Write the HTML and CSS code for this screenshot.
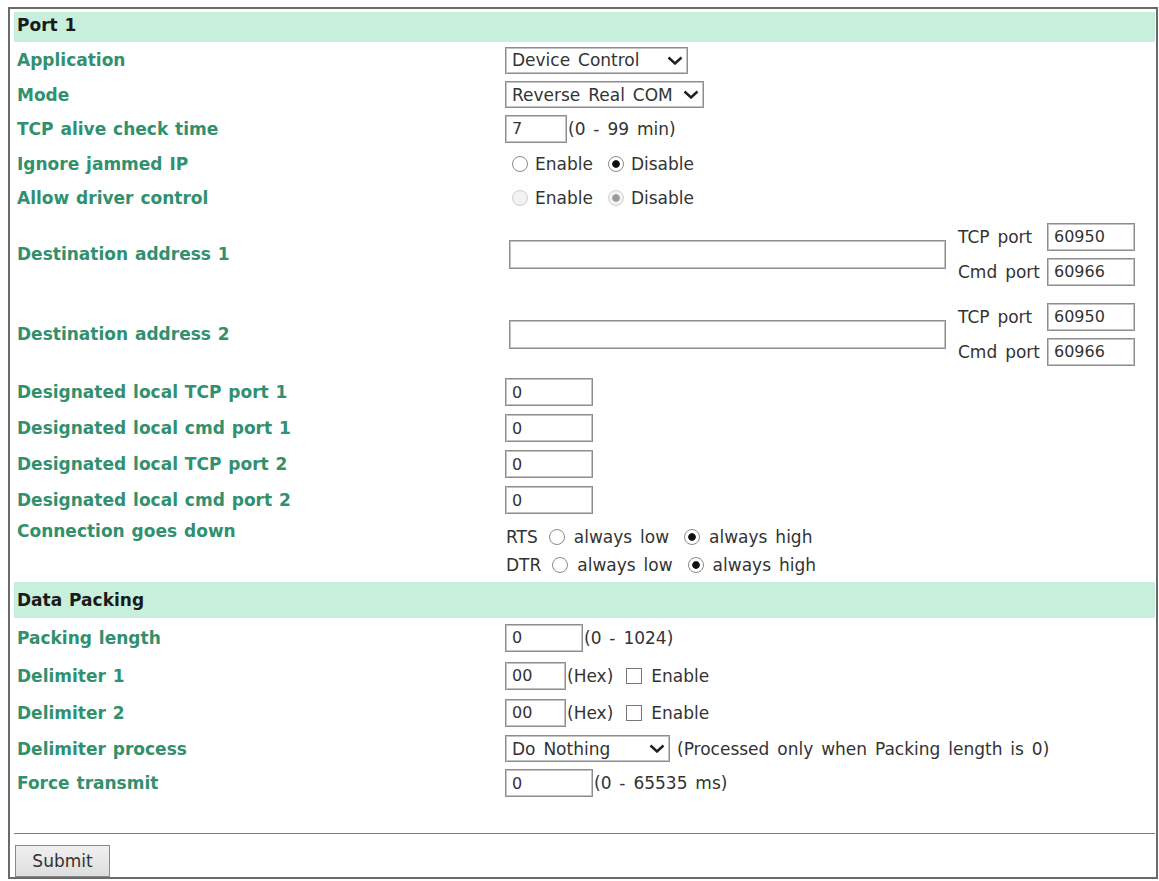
FILE: index.html
```html
<!DOCTYPE html>
<html>

<head>
  <title>Serial Port Operation Mode</title>
  <link rel="stylesheet" href="styles.css">
</head>

<body>
  <form class="frame">
    <!-- Port 1 section -->
    <div class="band">Port 1</div>

    <div class="row h36">
      <div class="label">Application</div>
      <div class="value">
        <span class="sel w-app">
          <select><option>Device Control</option></select>
          <svg class="chev" width="16" height="9" viewBox="0 0 16 9"><polyline points="1.5,1.5 8,7.5 14.5,1.5" /></svg>
        </span>
      </div>
    </div>

    <div class="row h33">
      <div class="label">Mode</div>
      <div class="value">
        <span class="sel w-mode">
          <select><option>Reverse Real COM</option></select>
          <svg class="chev" width="16" height="9" viewBox="0 0 16 9"><polyline points="1.5,1.5 8,7.5 14.5,1.5" /></svg>
        </span>
      </div>
    </div>

    <div class="row h35">
      <div class="label">TCP alive check time</div>
      <div class="value"><input class="txt w62" type="text" value="7"><span class="hint">(0 - 99 min)</span></div>
    </div>

    <div class="row h35">
      <div class="label">Ignore jammed IP</div>
      <div class="value">
        <label class="opt"><input type="radio" name="jam">Enable</label>
        <label class="opt"><input type="radio" name="jam" checked>Disable</label>
      </div>
    </div>

    <div class="row h33">
      <div class="label">Allow driver control</div>
      <div class="value">
        <label class="opt"><input type="radio" name="drv" disabled>Enable</label>
        <label class="opt"><input type="radio" name="drv" checked disabled>Disable</label>
      </div>
    </div>

    <div class="row h80">
      <div class="label">Destination address 1</div>
      <div class="value dest">
        <input class="txt addr" type="text">
        <div class="ports">
          <span>TCP port</span><input class="txt w88" type="text" value="60950">
          <span>Cmd port</span><input class="txt w88" type="text" value="60966">
        </div>
      </div>
    </div>

    <div class="row h80">
      <div class="label">Destination address 2</div>
      <div class="value dest">
        <input class="txt addr" type="text">
        <div class="ports">
          <span>TCP port</span><input class="txt w88" type="text" value="60950">
          <span>Cmd port</span><input class="txt w88" type="text" value="60966">
        </div>
      </div>
    </div>

    <div class="row h36">
      <div class="label">Designated local TCP port 1</div>
      <div class="value"><input class="txt w88" type="text" value="0"></div>
    </div>
    <div class="row h36">
      <div class="label">Designated local cmd port 1</div>
      <div class="value"><input class="txt w88" type="text" value="0"></div>
    </div>
    <div class="row h36">
      <div class="label">Designated local TCP port 2</div>
      <div class="value"><input class="txt w88" type="text" value="0"></div>
    </div>
    <div class="row h36">
      <div class="label">Designated local cmd port 2</div>
      <div class="value"><input class="txt w88" type="text" value="0"></div>
    </div>

    <div class="row h64 top">
      <div class="label">Connection goes down</div>
      <div class="value lines">
        <div>RTS<label class="opt"><input type="radio" name="rts">always low</label><label class="opt"><input type="radio" name="rts" checked>always high</label></div>
        <div>DTR<label class="opt"><input type="radio" name="dtr">always low</label><label class="opt"><input type="radio" name="dtr" checked>always high</label></div>
      </div>
    </div>

    <!-- Data Packing section -->
    <div class="band tall">Data Packing</div>

    <div class="row h39">
      <div class="label">Packing length</div>
      <div class="value"><input class="txt w78" type="text" value="0"><span class="hint">(0 - 1024)</span></div>
    </div>

    <div class="row h37">
      <div class="label">Delimiter 1</div>
      <div class="value">
        <input class="txt w61" type="text" value="00"><span class="hint">(Hex)</span>
        <label class="opt"><input type="checkbox">Enable</label>
      </div>
    </div>

    <div class="row h37">
      <div class="label">Delimiter 2</div>
      <div class="value">
        <input class="txt w61" type="text" value="00"><span class="hint">(Hex)</span>
        <label class="opt"><input type="checkbox">Enable</label>
      </div>
    </div>

    <div class="row h35">
      <div class="label">Delimiter process</div>
      <div class="value">
        <span class="sel w-proc">
          <select><option>Do Nothing</option></select>
          <svg class="chev" width="16" height="9" viewBox="0 0 16 9"><polyline points="1.5,1.5 8,7.5 14.5,1.5" /></svg>
        </span>
        <span class="note">(Processed only when Packing length is 0)</span>
      </div>
    </div>

    <div class="row h34">
      <div class="label">Force transmit</div>
      <div class="value"><input class="txt w88" type="text" value="0"><span class="hint">(0 - 65535 ms)</span></div>
    </div>

    <hr class="rule">
    <button class="submit" type="button">Submit</button>
  </form>
</body>

</html>
```

FILE: styles.css
```css
/* Common styles */
* {
  margin: 0;
  padding: 0;
  box-sizing: border-box;
}

body {
  background-color: white;
  font-family: "DejaVu Sans", Verdana, sans-serif;
  font-size: 17px;
  word-spacing: 2.5px;
  color: #333;
}

.frame {
  display: block;
  width: 1150px;
  height: 872px;
  margin: 7px 0 0 8px;
  padding: 3px 1px 0 4px;
  border: 2px solid #6a6a6a;
}

/* Section headers */
.band {
  height: 30px;
  padding: 0 0 4px 3px;
  line-height: 26px;
  background-color: #c8efdb;
  color: #1a1a1a;
  font-weight: bold;
  word-spacing: 1px;
}

.band.tall {
  height: 36px;
  line-height: 36px;
  padding-bottom: 0;
}

/* Form rows */
.row {
  display: grid;
  grid-template-columns: 491px 1fr;
  align-items: center;
}

.h33 { height: 33px; }
.h34 { height: 34px; }
.h35 { height: 35px; }
.h36 { height: 36px; }
.h37 { height: 37px; }
.h39 { height: 39px; }
.h64 { height: 64px; }
.h80 { height: 80px; }

.label {
  padding-left: 3px;
  color: #31906d;
  font-weight: bold;
  word-spacing: 1px;
  white-space: nowrap;
}

.value {
  display: flex;
  align-items: center;
  white-space: nowrap;
}

.row.top {
  align-items: start;
}

.row.top .label {
  line-height: 26px;
}

.value.lines {
  display: block;
  padding-top: 5px;
  padding-left: 1px;
}

.value.lines div {
  display: flex;
  align-items: center;
  height: 28px;
}

/* Text inputs */
.txt {
  height: 28px;
  padding: 0 6px;
  border: 1px solid #8e8e8e;
  box-shadow: inset 0 0 0 1px #c4c4c4;
  font-family: inherit;
  font-size: 16px;
  color: #333;
  background: white;
}

.w61 { width: 61px; }
.w62 { width: 62px; }
.w78 { width: 78px; }
.w88 { width: 88px; }

.hint {
  margin-left: 1px;
}

.note {
  margin-left: 7px;
}

/* Selects */
.sel {
  position: relative;
  display: inline-block;
  height: 27px;
}

.sel select {
  appearance: none;
  -webkit-appearance: none;
  width: 100%;
  height: 100%;
  padding: 0 24px 0 6px;
  border: 1px solid #8e8e8e;
  box-shadow: inset 0 0 0 1px #c4c4c4;
  border-radius: 0;
  background: white;
  font-family: inherit;
  font-size: 17px;
  word-spacing: 2.5px;
  color: #333;
}

.w-app { width: 183px; }
.w-mode { width: 199px; }
.w-proc { width: 165px; }

.chev {
  position: absolute;
  right: 5px;
  top: 9px;
  pointer-events: none;
}

.chev polyline {
  fill: none;
  stroke: #1e1e1e;
  stroke-width: 2.4;
}

/* Radios and checkboxes */
.opt {
  display: inline-flex;
  align-items: center;
  margin-right: 8px;
}

.opt input {
  appearance: none;
  -webkit-appearance: none;
  width: 16px;
  height: 16px;
  margin: 0 7px 0 7px;
  border: 1px solid #8a8a8a;
  background: white;
}

.opt input[type="radio"] {
  border-radius: 50%;
}

.opt input[type="radio"]:checked {
  background: radial-gradient(circle, #111 0 3.4px, white 4.2px);
}

.opt input[type="radio"]:disabled {
  border-color: #cfcfcf;
  background: #f2f2f2;
}

.opt input[type="radio"]:disabled:checked {
  background: radial-gradient(circle, #9a9a9a 0 3.4px, #f2f2f2 4.2px);
}

.opt input[type="checkbox"] {
  width: 16px;
  height: 16px;
  margin: 0 9px 0 13px;
  border-color: #777;
}

.value.lines .opt {
  margin-right: 4px;
}

.value.lines .opt input {
  margin: 0 9px 0 11px;
}

/* Destination rows */
.value.dest .addr {
  width: 437px;
  height: 29px;
  margin-left: 4px;
}

.ports {
  display: grid;
  grid-template-columns: auto 88px;
  column-gap: 7px;
  row-gap: 7px;
  align-items: center;
  margin-left: 12px;
}

/* Footer */
.rule {
  margin-top: 33px;
  border: none;
  border-top: 1px solid #7d7d7d;
}

.submit {
  display: block;
  width: 95px;
  height: 32px;
  margin: 11px 0 0 1px;
  border: 1px solid #8a8a8a;
  background: linear-gradient(#f0f0f0, #dedede);
  font-family: inherit;
  font-size: 17px;
  color: #333;
}
```
